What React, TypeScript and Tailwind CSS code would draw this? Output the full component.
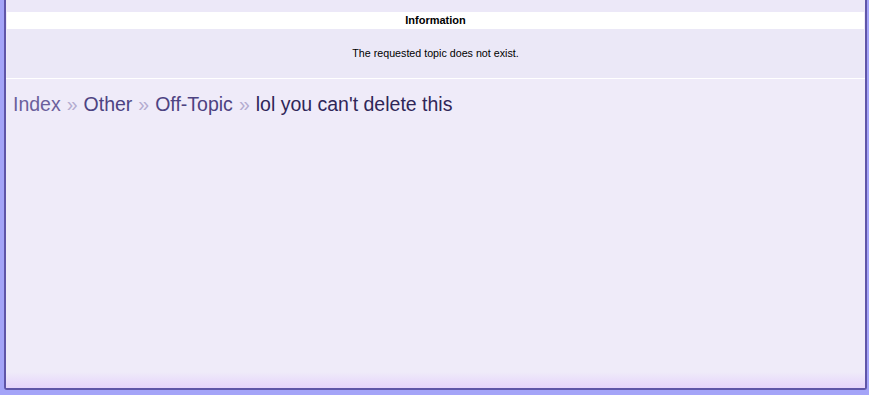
export default function App() {
  return (
    <div className="h-[395px] w-[869px] bg-[#a4a4f8] pl-[4px] pr-[2px] pb-[5px] font-['Liberation_Sans',sans-serif]">
      <div className="flex h-full flex-col rounded-b-[3px] border-x-2 border-b-2 border-x-[#5f55a8] border-b-[#5f55a8] bg-[#efebf9]">
        <div className="h-[12px] bg-[#ece8f8]" />
        <div className="mx-px flex h-[17px] items-center justify-center bg-white text-[11px] font-bold text-black">
          Information
        </div>
        <div className="mx-px flex h-[49px] items-center justify-center bg-[#ebe8f7] text-[10.7px] text-black">
          The requested topic does not exist.
        </div>
        <div className="h-px bg-white" />
        <nav className="flex items-center gap-[6px] px-[7px] pt-[13px] text-[19.5px] leading-[24px]">
          <span className="text-[#6b5f9c]">Index</span>
          <span className="text-[#b4acd0]">»</span>
          <span className="text-[#4d4382]">Other</span>
          <span className="text-[#b4acd0]">»</span>
          <span className="text-[#4d4382]">Off-Topic</span>
          <span className="text-[#b4acd0]">»</span>
          <span className="text-[#2f2658]">lol you can't delete this</span>
        </nav>
        <div className="flex-1" />
        <div className="h-[16px] bg-gradient-to-b from-[#efebf9] to-[#e5d3fb]" />
      </div>
    </div>
  );
}
